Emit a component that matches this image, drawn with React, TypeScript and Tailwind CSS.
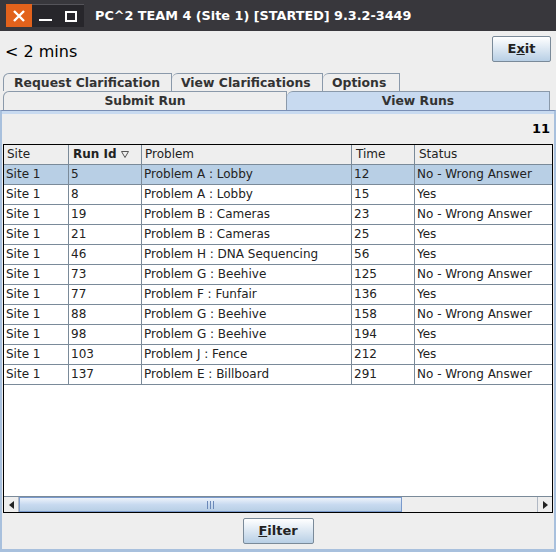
import React from "react";

const rows = [
  { site: "Site 1", id: "5", problem: "Problem A : Lobby", time: "12", status: "No - Wrong Answer" },
  { site: "Site 1", id: "8", problem: "Problem A : Lobby", time: "15", status: "Yes" },
  { site: "Site 1", id: "19", problem: "Problem B : Cameras", time: "23", status: "No - Wrong Answer" },
  { site: "Site 1", id: "21", problem: "Problem B : Cameras", time: "25", status: "Yes" },
  { site: "Site 1", id: "46", problem: "Problem H : DNA Sequencing", time: "56", status: "Yes" },
  { site: "Site 1", id: "73", problem: "Problem G : Beehive", time: "125", status: "No - Wrong Answer" },
  { site: "Site 1", id: "77", problem: "Problem F : Funfair", time: "136", status: "Yes" },
  { site: "Site 1", id: "88", problem: "Problem G : Beehive", time: "158", status: "No - Wrong Answer" },
  { site: "Site 1", id: "98", problem: "Problem G : Beehive", time: "194", status: "Yes" },
  { site: "Site 1", id: "103", problem: "Problem J : Fence", time: "212", status: "Yes" },
  { site: "Site 1", id: "137", problem: "Problem E : Billboard", time: "291", status: "No - Wrong Answer" },
];

const font = { fontFamily: '"DejaVu Sans", sans-serif' };

function JButton({ children, className }: { children: React.ReactNode; className?: string }) {
  return (
    <div
      className={
        "flex items-center justify-center border border-[#7a8a99] bg-gradient-to-b from-white to-[#b8cfe5] text-[13px] font-bold text-[#222] " +
        (className ?? "")
      }
    >
      {children}
    </div>
  );
}

export default function App() {
  return (
    <div className="w-[556px] h-[552px] bg-[#eeeeee] flex flex-col overflow-hidden" style={font}>
      {/* Title bar */}
      <div className="h-[31px] bg-[#38373c] flex items-center shrink-0">
        <div className="ml-[6px] flex h-[23px]">
          <div className="w-[26px] bg-[#e2621c] flex items-center justify-center">
            <svg width="14" height="14" viewBox="0 0 14 14">
              <path d="M2 2 L12 12 M12 2 L2 12" stroke="white" strokeWidth="2.4" />
            </svg>
          </div>
          <div className="w-[26px] bg-[#27262b] border-t border-[#55545a] flex items-end justify-center pb-[6px]">
            <div className="w-[13px] h-[2px] bg-white" />
          </div>
          <div className="w-[26px] bg-[#27262b] border-t border-[#55545a] flex items-center justify-center">
            <div className="w-[12px] h-[11px] border-2 border-white" />
          </div>
        </div>
        <div className="ml-[11px] text-white font-bold text-[12.8px]">
          PC^2 TEAM 4 (Site 1) [STARTED] 9.3.2-3449
        </div>
      </div>

      {/* Header line */}
      <div className="h-[42px] flex items-start shrink-0">
        <div className="ml-[5px] mt-[9px] text-[16px] text-black">&lt; 2 mins</div>
        <JButton className="ml-auto mr-[5px] mt-[5px] w-[59px] h-[26px] rounded-[2px]">
          E<span className="underline">x</span>it
        </JButton>
      </div>

      {/* Tabs row 1 */}
      <div className="h-[18px] flex pl-[3px] shrink-0 text-[12.4px] font-bold text-[#333]">
        <div className="w-[169px] border-t border-l border-r border-[#8a99aa] rounded-tl-[6px] pl-[10px] leading-[17px]">Request Clarification</div>
        <div className="w-[151px] border-t border-r border-[#8a99aa] rounded-tl-[6px] pl-[9px] leading-[17px]">View Clarifications</div>
        <div className="w-[77px] border-t border-r border-[#8a99aa] rounded-tl-[6px] pl-[9px] leading-[17px]">Options</div>
      </div>
      {/* Tabs row 2 */}
      <div className="h-[19px] flex pl-[3px] shrink-0 text-[12.4px] font-bold text-[#333]">
        <div className="w-[284px] border-t border-l border-r border-[#8a99aa] rounded-tl-[6px] text-center leading-[18px]">Submit Run</div>
        <div className="w-[263px] border-t border-r border-[#8a99aa] rounded-tl-[6px] bg-[#c8daf0] text-center leading-[18px]">View Runs</div>
      </div>

      {/* Content panel */}
      <div className="flex-1 flex flex-col border-l-2 border-r-2 border-b-[3px] border-t border-[#a8c0dd] border-t-[#7a8fb5] min-h-0 bg-[#eeeeee]">
        <div className="h-[3px] bg-[#c8daf0]" />
        <div className="h-[30px] flex items-center justify-end pr-[4px] text-[13px] font-bold text-black">11</div>

        {/* Table */}
        <div className="mx-[1px] flex-1 border border-black bg-white flex flex-col min-h-0 text-[12px] text-[#222]">
          <div className="h-[20px] flex bg-[#eeeeee] border-b border-[#7a8a99]">
            <div className="w-[65px] pl-[3px] border-r border-[#7a8a99] leading-[19px]">Site</div>
            <div className="w-[73px] pl-[4px] border-r border-[#7a8a99] leading-[19px] font-bold flex items-center gap-[4px]">
              Run Id
              <svg width="8" height="7" viewBox="0 0 8 7">
                <path d="M0.5 0.5 H7.5 L4 6.5 Z" fill="none" stroke="#555" strokeWidth="1" />
              </svg>
            </div>
            <div className="w-[210px] pl-[3px] border-r border-[#7a8a99] leading-[19px]">Problem</div>
            <div className="w-[63px] pl-[4px] border-r border-[#7a8a99] leading-[19px]">Time</div>
            <div className="flex-1 pl-[4px] leading-[19px]">Status</div>
          </div>
          <div className="flex-1">
            {rows.map((r, i) => (
              <div key={r.id} className={"h-[20px] flex border-b border-[#7a8a99] " + (i === 0 ? "bg-[#b8cfe5]" : "")}>
                <div className="w-[65px] pl-[2px] border-r border-[#7a8a99] leading-[19px]">{r.site}</div>
                <div className="w-[73px] pl-[2px] border-r border-[#7a8a99] leading-[19px]">{r.id}</div>
                <div className="w-[210px] pl-[2px] border-r border-[#7a8a99] leading-[19px]">{r.problem}</div>
                <div className="w-[63px] pl-[2px] border-r border-[#7a8a99] leading-[19px]">{r.time}</div>
                <div className="flex-1 pl-[2px] leading-[19px]">{r.status}</div>
              </div>
            ))}
          </div>
          {/* Horizontal scrollbar */}
          <div className="h-[16px] flex bg-[#eeeeee] border-t border-[#7a8a99]">
            <div className="w-[15px] border-r border-[#b0b8c4] flex items-center justify-center">
              <svg width="5" height="8" viewBox="0 0 5 8"><path d="M5 0 L0 4 L5 8 Z" fill="#222" /></svg>
            </div>
            <div className="w-[383px] border border-[#7a9acc] bg-gradient-to-b from-[#eef3fa] via-[#c8daf0] to-[#b8cfe5] flex items-center justify-center">
              <div className="flex gap-[2px]">
                <div className="w-[1px] h-[8px] bg-[#6a88b8]" />
                <div className="w-[1px] h-[8px] bg-[#6a88b8]" />
                <div className="w-[1px] h-[8px] bg-[#6a88b8]" />
              </div>
            </div>
            <div className="flex-1" />
            <div className="w-[15px] border-l border-[#b0b8c4] flex items-center justify-center">
              <svg width="5" height="8" viewBox="0 0 5 8"><path d="M0 0 L5 4 L0 8 Z" fill="#222" /></svg>
            </div>
          </div>
        </div>

        <div className="h-[36px] flex items-center justify-center shrink-0">
          <JButton className="w-[71px] h-[26px] rounded-[2px]">
            <span className="underline">F</span>ilter
          </JButton>
        </div>
      </div>
    </div>
  );
}
